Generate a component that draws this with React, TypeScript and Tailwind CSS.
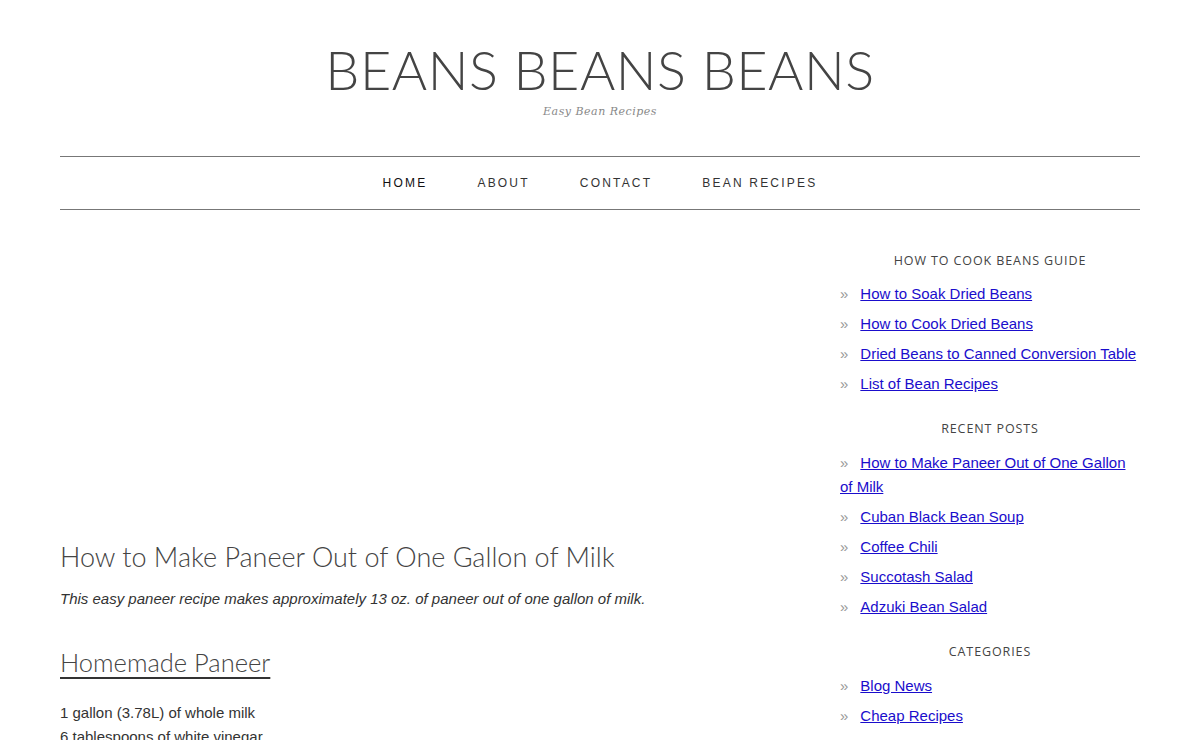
import React from "react";

const light = { fontFamily: "Lato, 'Open Sans', sans-serif" };
const arial = { fontFamily: "'Liberation Sans', Arial, sans-serif" };

const guide = [
  "How to Soak Dried Beans",
  "How to Cook Dried Beans",
  "Dried Beans to Canned Conversion Table",
  "List of Bean Recipes",
];
const recent = [
  "How to Make Paneer Out of One Gallon of Milk",
  "Cuban Black Bean Soup",
  "Coffee Chili",
  "Succotash Salad",
  "Adzuki Bean Salad",
];
const categories = ["Blog News", "Cheap Recipes"];

function Widget({ title, items }: { title: string; items: string[] }) {
  return (
    <section className="mb-[24px]">
      <h3
        className="text-center text-[12.5px] uppercase tracking-[0.9px] text-[#444] mb-[12px]"
        style={{ fontFamily: "'Open Sans', sans-serif" }}
      >
        {title}
      </h3>
      <ul className="text-[15px] leading-[24px]" style={arial}>
        {items.map((item) => (
          <li key={item} className="mb-[6px]">
            <span className="text-[#999] mr-[12px]">»</span>
            <a href="#" className="text-[#1a0dcc] underline">
              {item}
            </a>
          </li>
        ))}
      </ul>
    </section>
  );
}

export default function App() {
  return (
    <div className="bg-white overflow-hidden h-[740px]">
      <div className="mx-[60px]">
        {/* Header */}
        <header className="text-center pt-[40px] pb-[35px]">
          <h1
            className="text-[54px] leading-[60px] font-light tracking-[0.5px] text-[#444]"
            style={light}
          >
            BEANS BEANS BEANS
          </h1>
          <p
            className="italic text-[11px] text-[#888] mt-[4px] tracking-[0.5px]"
            style={{ fontFamily: "'DejaVu Serif', serif" }}
          >
            Easy Bean Recipes
          </p>
        </header>

        {/* Nav */}
        <nav
          className="border-t border-b border-[#777] h-[54px] flex items-center justify-center gap-[50px] text-[12px] tracking-[2.2px] text-[#333]"
          style={arial}
        >
          <a href="#" className="text-[#111]">HOME</a>
          <a href="#">ABOUT</a>
          <a href="#">CONTACT</a>
          <a href="#">BEAN RECIPES</a>
        </nav>

        <div className="flex justify-between">
          {/* Main */}
          <main className="w-[720px] pt-[328px]">
            <h2
              className="text-[27px] leading-[38px] font-light text-[#444]"
              style={light}
            >
              How to Make Paneer Out of One Gallon of Milk
            </h2>
            <p className="italic text-[15px] leading-[24px] text-[#333] mt-[11px]" style={arial}>
              This easy paneer recipe makes approximately 13 oz. of paneer out of one gallon of milk.
            </p>
            <h3
              className="text-[25.5px] leading-[34px] font-light text-[#444] underline decoration-[#333] underline-offset-[5px] mt-[34px]"
              style={light}
            >
              Homemade Paneer
            </h3>
            <div className="text-[15px] leading-[24px] text-[#333] mt-[22px]" style={arial}>
              <p>1 gallon (3.78L) of whole milk</p>
              <p>6 tablespoons of white vinegar</p>
            </div>
          </main>

          {/* Sidebar */}
          <aside className="w-[300px] pt-[42px]">
            <Widget title="How to Cook Beans Guide" items={guide} />
            <Widget title="Recent Posts" items={recent} />
            <Widget title="Categories" items={categories} />
          </aside>
        </div>
      </div>
    </div>
  );
}
